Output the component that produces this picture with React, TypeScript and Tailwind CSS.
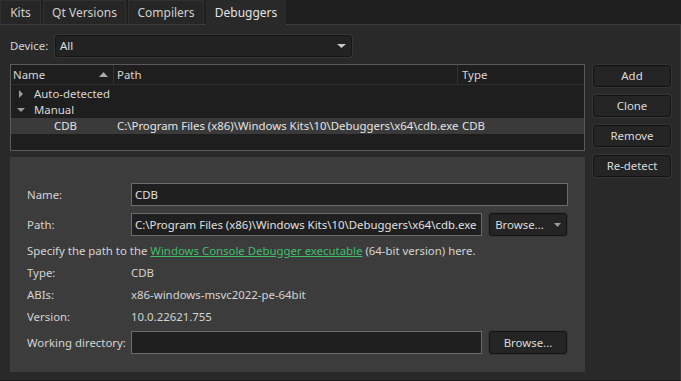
import React from "react";

const font = { fontFamily: '"Noto Sans", "Open Sans", sans-serif' };

function Tab({ label, active, w }: { label: string; active?: boolean; w: string }) {
  if (active) {
    return (
      <div className={`${w} h-[25px] flex items-center justify-center bg-[#292929] text-[#e4e4e4] -mb-px z-10`}>
        {label}
      </div>
    );
  }
  return (
    <div className={`${w} h-[24px] flex items-center justify-center bg-[#262626] border border-[#303030] border-b-0 text-[#d0d0d0]`}>
      {label}
    </div>
  );
}

function Btn({ children, h = "h-[23px]", className = "" }: { children: React.ReactNode; h?: string; className?: string }) {
  return (
    <div
      className={`${h} flex items-center justify-center rounded-[3px] bg-[#242424] border border-[#121212] shadow-[0_0_0_1px_#353535] text-[#dcdcdc] ${className}`}
    >
      {children}
    </div>
  );
}

function Field({ value, className = "" }: { value?: string; className?: string }) {
  return (
    <div className={`h-[23px] flex items-center px-[3px] bg-[#1f1f1f] border border-[#6b6b6b] text-[#e0e0e0] whitespace-nowrap overflow-hidden ${className}`}>
      {value}
    </div>
  );
}

function Caret({ down }: { down?: boolean }) {
  return down ? (
    <svg width="8" height="8" viewBox="0 0 8 8">
      <path d="M0 2h8L4 6z" fill="#9a9a9a" />
    </svg>
  ) : (
    <svg width="8" height="8" viewBox="0 0 8 8">
      <path d="M2 0v8l4-4z" fill="#9a9a9a" />
    </svg>
  );
}

export default function App() {
  return (
    <div className="w-[681px] h-[381px] bg-[#1f1f1f] flex flex-col text-[11.4px] overflow-hidden" style={font}>
      <div className="flex gap-[2px] h-[24px] items-start text-[12px]">
        <Tab label="Kits" w="w-[41px]" />
        <Tab label="Qt Versions" w="w-[83px]" />
        <Tab label="Compilers" w="w-[76px]" />
        <Tab label="Debuggers" w="w-[80px]" active />
      </div>
      <div className="flex-1 bg-[#292929] border-t border-[#3c3c3c] border-r border-r-[#3a3a3a] border-b border-b-[#1a1a1a] pl-[10px] pt-[10px] flex flex-col">
        <div className="flex items-center h-[22px]">
          <span className="w-[45px] text-[#d4d4d4]">Device:</span>
          <div className="w-[297px] h-[22px] rounded-[3px] bg-[#222222] border border-[#161616] shadow-[0_0_0_1px_#363636] flex items-center justify-between pl-[4px] pr-[5px] text-[#e0e0e0]">
            <span>All</span>
            <svg width="9" height="6" viewBox="0 0 9 6">
              <path d="M0 1h9L4.5 5z" fill="#c8c8c8" />
            </svg>
          </div>
        </div>
        <div className="flex mt-[7px]">
          <div className="w-[575px] flex flex-col">
            <div className="h-[87px] bg-[#1e1e1e] border border-[#5a5a5a] flex flex-col text-[#d8d8d8]">
              <div className="h-[20px] flex border-b border-[#2c2c2c] shrink-0">
                <div className="w-[103px] flex items-center justify-between pl-[2px] pr-[5px] border-r border-[#333333]">
                  <span>Name</span>
                  <svg width="9" height="5" viewBox="0 0 9 5">
                    <path d="M0 5L4.5 0L9 5z" fill="#a8a8a8" />
                  </svg>
                </div>
                <div className="w-[344px] flex items-center pl-[3px] border-r border-[#333333]">Path</div>
                <div className="flex-1 flex items-center pl-[4px]">Type</div>
              </div>
              <div className="h-[16px] flex items-center pl-[6px] mt-[1px]">
                <span className="w-[17px] flex"><Caret /></span>
                <span>Auto-detected</span>
              </div>
              <div className="h-[16px] flex items-center pl-[6px]">
                <span className="w-[17px] flex"><Caret down /></span>
                <span>Manual</span>
              </div>
              <div className="h-[16px] flex items-center bg-[#3a3a3a] text-[#e4e4e4] whitespace-nowrap">
                <span className="w-[106px] pl-[43px]">CDB</span>
                <span className="w-[345px]">C:\Program Files (x86)\Windows Kits\10\Debuggers\x64\cdb.exe</span>
                <span>CDB</span>
              </div>
            </div>
            <div className="mt-[6px] h-[215px] bg-[#3c3c3c] flex flex-col pl-[17px] text-[#d4d4d4]">
              <div className="flex items-center mt-[26px]">
                <span className="w-[104px]">Name:</span>
                <Field value="CDB" className="w-[437px]" />
              </div>
              <div className="flex items-center mt-[7px]">
                <span className="w-[104px]">Path:</span>
                <Field value="C:\Program Files (x86)\Windows Kits\10\Debuggers\x64\cdb.exe" className="w-[351px]" />
                <Btn className="ml-[7px] w-[78px] gap-[10px]">
                  <span>Browse...</span>
                  <svg width="7" height="4" viewBox="0 0 7 4">
                    <path d="M0 0h7L3.5 4z" fill="#9a9a9a" />
                  </svg>
                </Btn>
              </div>
              <div className="h-[22px] flex items-center mt-[4px] whitespace-nowrap">
                Specify the path to the&nbsp;
                <span className="text-[#3fbf6a] underline">Windows Console Debugger executable</span>
                &nbsp;(64-bit version) here.
              </div>
              <div className="h-[22px] flex items-center">
                <span className="w-[104px]">Type:</span>
                <span>CDB</span>
              </div>
              <div className="h-[22px] flex items-center">
                <span className="w-[104px]">ABIs:</span>
                <span>x86-windows-msvc2022-pe-64bit</span>
              </div>
              <div className="h-[22px] flex items-center">
                <span className="w-[104px]">Version:</span>
                <span>10.0.22621.755</span>
              </div>
              <div className="flex items-center mt-[3px]">
                <span className="w-[104px] whitespace-nowrap">Working directory:</span>
                <Field className="w-[351px]" />
                <Btn className="ml-[7px] w-[78px]">Browse...</Btn>
              </div>
            </div>
          </div>
          <div className="ml-[8px] mt-[1px] w-[78px] flex flex-col gap-[8px]">
            <Btn h="h-[22px]">Add</Btn>
            <Btn h="h-[22px]">Clone</Btn>
            <Btn h="h-[22px]">Remove</Btn>
            <Btn h="h-[22px]">Re-detect</Btn>
          </div>
        </div>
      </div>
    </div>
  );
}
